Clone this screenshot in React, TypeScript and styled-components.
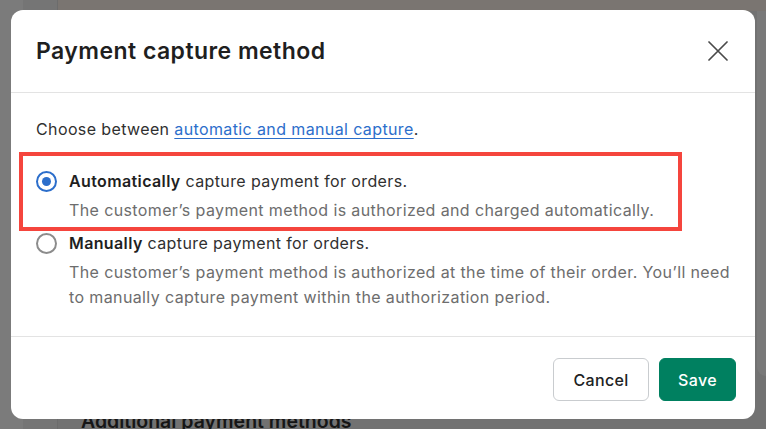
import React from "react";
import styled, { createGlobalStyle } from "styled-components";

const GlobalStyle = createGlobalStyle`
  html, body { margin: 0; padding: 0; }
  body {
    font-family: Inter, "Noto Sans", "Liberation Sans", sans-serif;
    -webkit-font-smoothing: antialiased;
  }
  * { box-sizing: border-box; }
`;

const Page = styled.div`
  position: relative;
  width: 766px;
  height: 429px;
  overflow: hidden;
  display: flex;
  background: #727272;
`;

const Rail = styled.div`
  width: 23px;
  flex: none;
  background: #7b7b7b;
`;

const Nav = styled.div`
  width: 35px;
  flex: none;
  background: #757575;
  border-right: 1px solid #6c6c6c;
`;

const Main = styled.div`
  flex: 1;
  display: flex;
  flex-direction: column;
`;

const TopBand = styled.div`
  height: 11px;
  flex: none;
  background: #7a7571;
`;

const MainRow = styled.div`
  flex: 1;
  display: flex;
`;

const Content = styled.div`
  flex: 1;
  display: flex;
  flex-direction: column;
  justify-content: flex-end;
  padding: 0 0 0 23px;
`;

const Aside = styled.div`
  width: 9px;
  height: 365px;
  flex: none;
  background: #797979;
  border-bottom-left-radius: 10px;
`;

const BgHeading = styled.div`
  font-size: 19.5px;
  font-weight: 600;
  color: #161616;
  line-height: 24px;
  transform: translateY(4px);
`;

const Dialog = styled.div`
  position: absolute;
  left: 11px;
  top: 10px;
  width: 744px;
  height: 409px;
  background: #ffffff;
  border-radius: 12px;
  display: flex;
  flex-direction: column;
  overflow: hidden;
`;

const Header = styled.div`
  height: 83px;
  flex: none;
  display: flex;
  align-items: center;
  justify-content: space-between;
  padding: 0 27px 0 25px;
  border-bottom: 1px solid #e3e3e3;
`;

const Title = styled.h2`
  margin: 0;
  font-size: 23px;
  font-weight: 600;
  color: #1f1f1f;
  letter-spacing: 0.45px;
`;

const CloseButton = styled.button`
  width: 20px;
  height: 20px;
  padding: 0;
  border: 0;
  background: none;
  display: flex;
  align-items: center;
  justify-content: center;
  cursor: pointer;
`;

const Body = styled.div`
  flex: 1;
  padding: 24px 25px;
  border-bottom: 1px solid #e3e3e3;
  display: flex;
  flex-direction: column;
  gap: 28px;
  color: #303030;
  font-size: 16px;
  letter-spacing: 0.38px;
`;

const Intro = styled.p`
  margin: 0;
  line-height: 24px;
`;

const Link = styled.a`
  color: #2c6ecb;
  text-decoration: underline;
  text-underline-offset: 3px;
  text-decoration-thickness: 1px;
`;

const Options = styled.div`
  display: flex;
  flex-direction: column;
  gap: 8px;
`;

const Option = styled.label`
  display: grid;
  grid-template-columns: 21px 1fr;
  column-gap: 12px;
  row-gap: 5px;
  align-items: center;
  cursor: pointer;
`;

const Radio = styled.span<{ $checked?: boolean }>`
  width: 21px;
  height: 21px;
  border-radius: 50%;
  border: 2px solid ${(p) => (p.$checked ? "#2c6ecb" : "#8c8c8c")};
  display: flex;
  align-items: center;
  justify-content: center;
  &::after {
    content: "";
    width: 9px;
    height: 9px;
    border-radius: 50%;
    background: ${(p) => (p.$checked ? "#2c6ecb" : "transparent")};
  }
`;

const OptionLabel = styled.span`
  line-height: 24px;
  color: #303030;
  b { font-weight: 600; color: #1f1f1f; }
`;

const Description = styled.span`
  grid-column: 2;
  line-height: 25px;
  color: #6d6d6d;
`;

const Footer = styled.div`
  height: 82px;
  flex: none;
  display: flex;
  align-items: center;
  justify-content: flex-end;
  gap: 10px;
  padding: 3px 19px 0 0;
`;

const Button = styled.button<{ $primary?: boolean; $w: number }>`
  width: ${(p) => p.$w}px;
  height: 43px;
  padding: 0;
  border-radius: 6px;
  font-family: inherit;
  font-size: 16px;
  font-weight: 500;
  letter-spacing: 0.35px;
  border: 1px solid ${(p) => (p.$primary ? "#008060" : "#c9cccf")};
  background: ${(p) => (p.$primary ? "#008060" : "#ffffff")};
  color: ${(p) => (p.$primary ? "#ffffff" : "#202223")};
  cursor: pointer;
`;

const Highlight = styled.div`
  position: absolute;
  left: 19px;
  top: 152px;
  width: 663px;
  height: 79px;
  border: 4px solid #f5453d;
  pointer-events: none;
`;

export default function App() {
  return (
    <>
      <GlobalStyle />
      <Page>
        <Rail />
        <Nav />
        <Main>
          <TopBand />
          <MainRow>
            <Content>
              <BgHeading>Additional payment methods</BgHeading>
            </Content>
            <Aside />
          </MainRow>
        </Main>
        <Dialog role="dialog" aria-modal="true">
          <Header>
            <Title>Payment capture method</Title>
            <CloseButton aria-label="Close">
              <svg width="20" height="20" viewBox="0 0 20 20">
                <path d="M1 1 L19 19 M19 1 L1 19" stroke="#4a4a4a" strokeWidth="1.7" strokeLinecap="round" fill="none" />
              </svg>
            </CloseButton>
          </Header>
          <Body>
            <Intro>
              Choose between <Link href="#">automatic and manual capture</Link>.
            </Intro>
            <Options>
              <Option>
                <Radio $checked />
                <OptionLabel>
                  <b>Automatically</b> capture payment for orders.
                </OptionLabel>
                <Description>
                  The customer’s payment method is authorized and charged automatically.
                </Description>
              </Option>
              <Option>
                <Radio />
                <OptionLabel>
                  <b>Manually</b> capture payment for orders.
                </OptionLabel>
                <Description>
                  The customer’s payment method is authorized at the time of their order. You’ll need to manually capture payment within the authorization period.
                </Description>
              </Option>
            </Options>
          </Body>
          <Footer>
            <Button $w={96}>Cancel</Button>
            <Button $primary $w={77}>Save</Button>
          </Footer>
        </Dialog>
        <Highlight />
      </Page>
    </>
  );
}
